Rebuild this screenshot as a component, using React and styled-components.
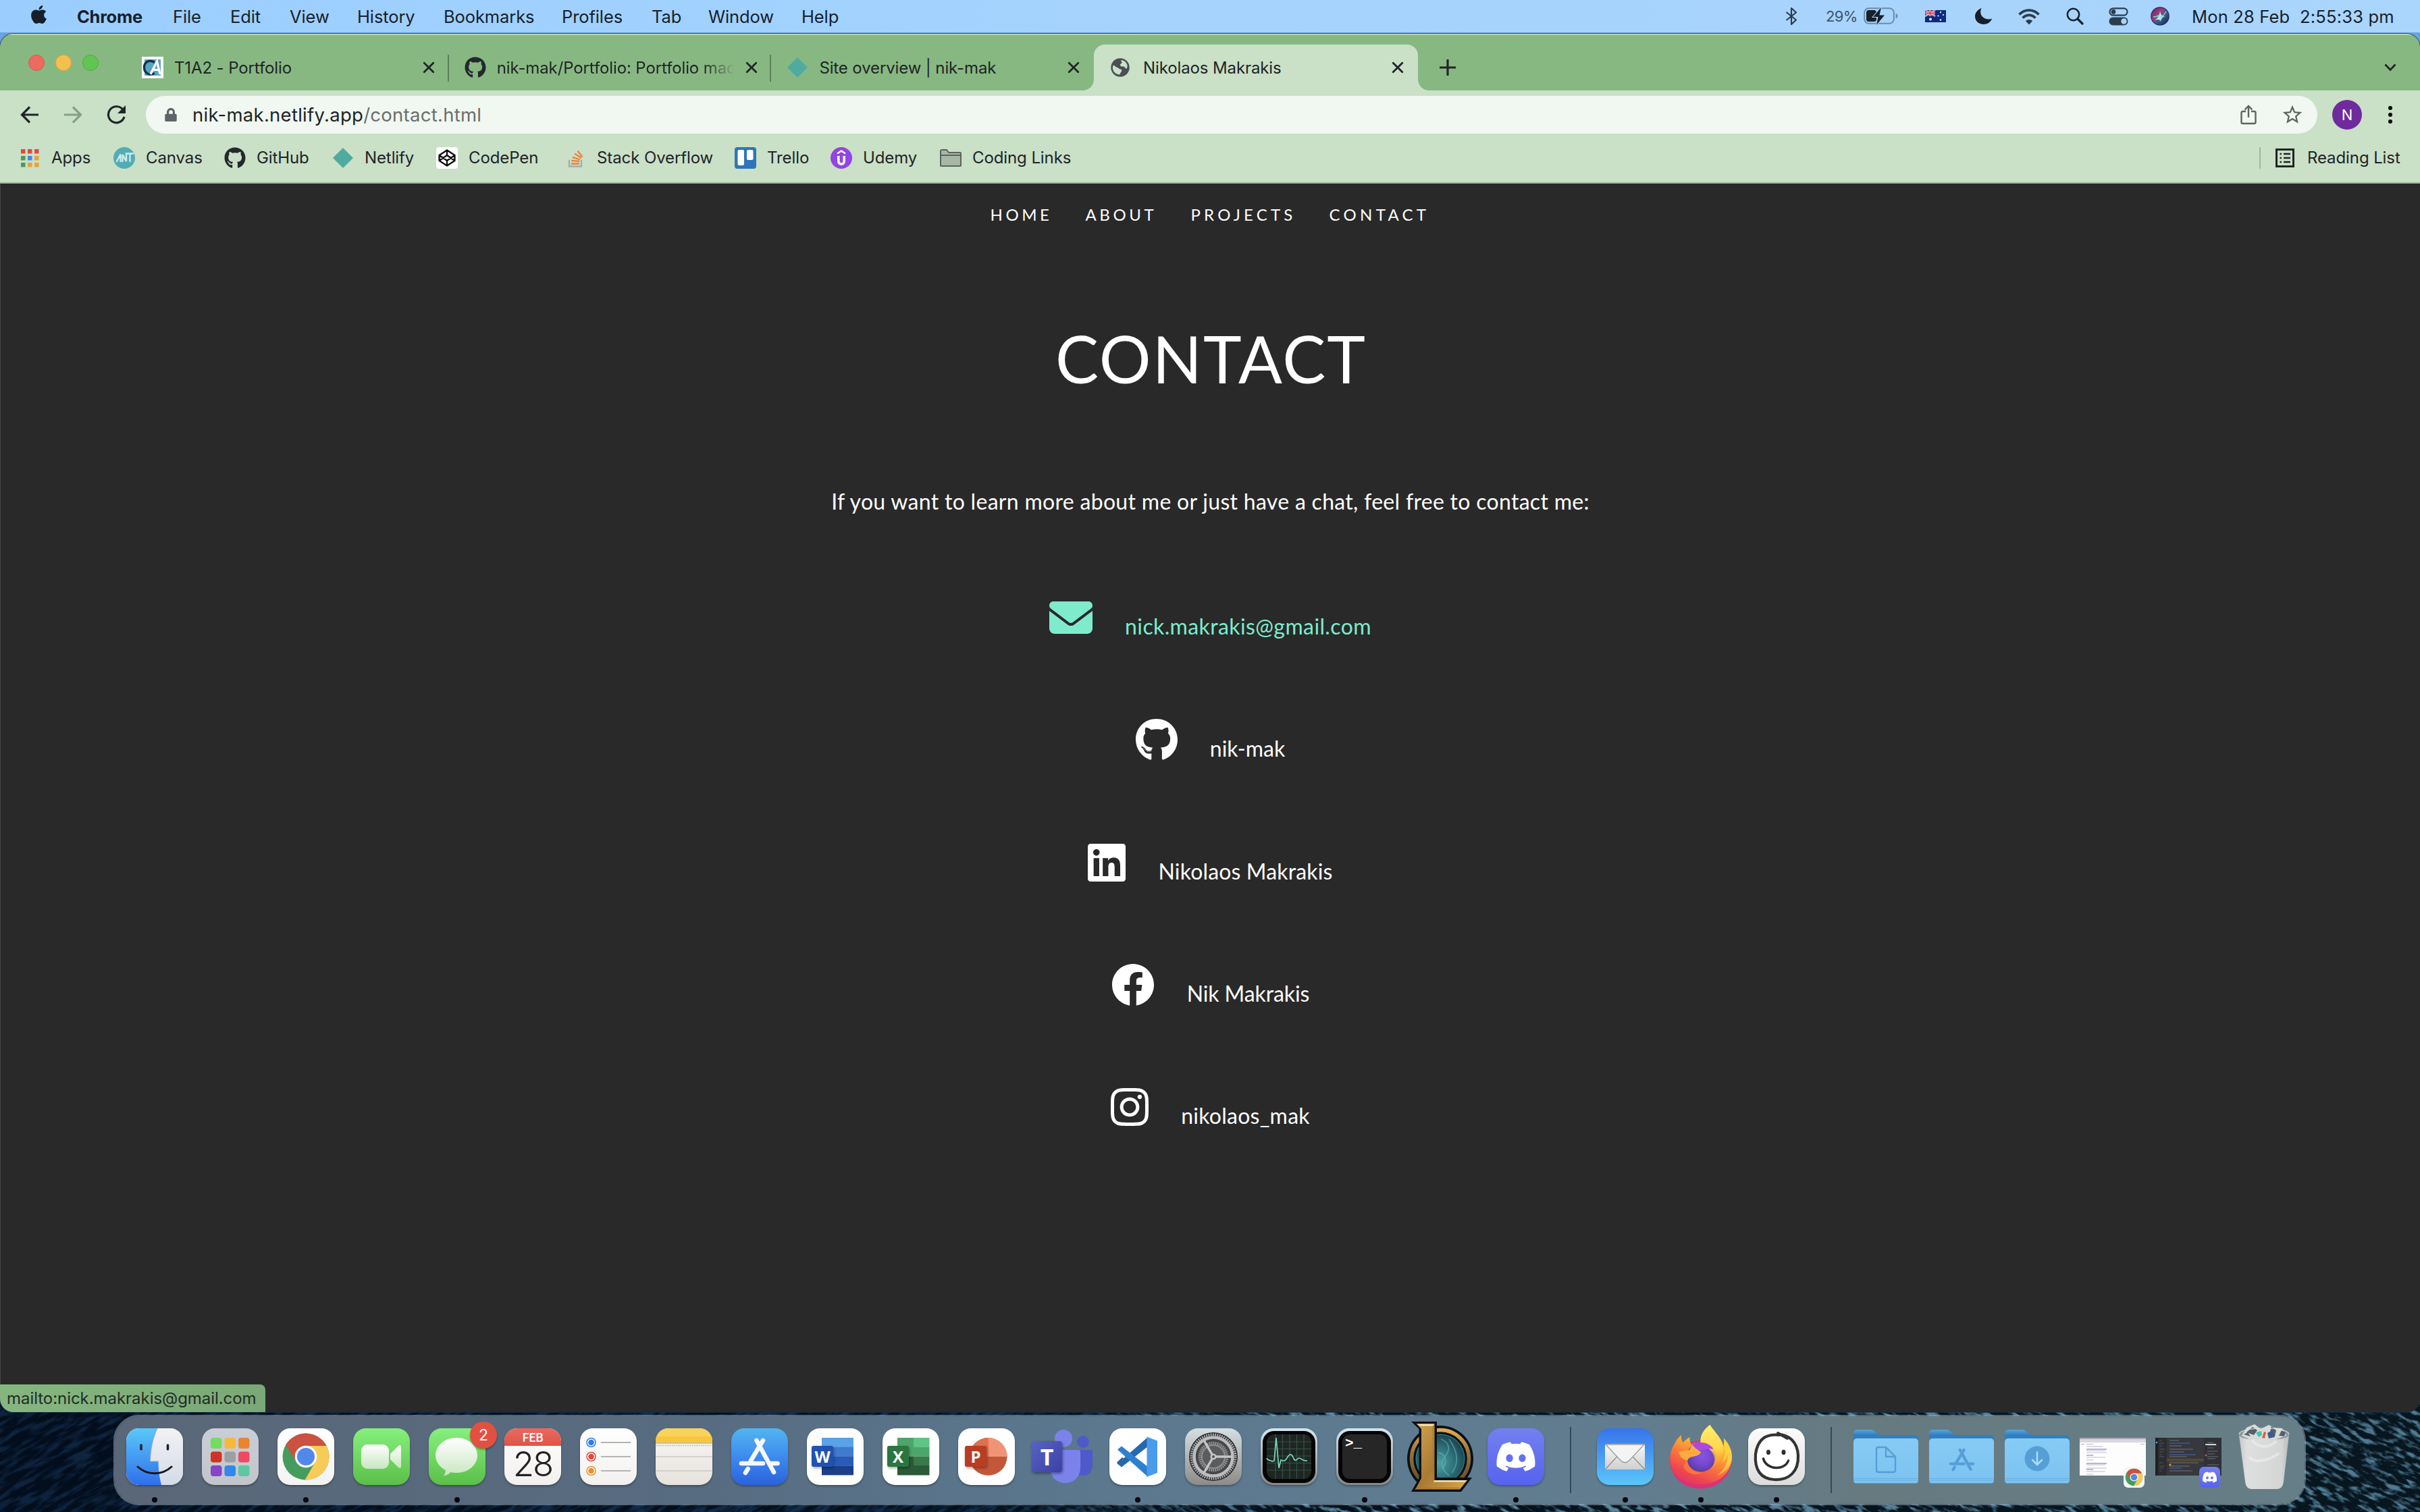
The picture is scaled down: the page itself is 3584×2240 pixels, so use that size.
import React from "react";
import styled, { createGlobalStyle, css } from "styled-components";
import { FaEnvelope, FaGithub, FaLinkedin, FaInstagram } from "react-icons/fa6";
import { FaFacebook, FaApple, FaDiscord, FaLock } from "react-icons/fa";

const ui = `Inter, "Liberation Sans", sans-serif`;
const page = `Lato, "Open Sans", sans-serif`;

const GlobalStyle = createGlobalStyle`
  html, body { margin: 0; padding: 0; background: #061320; }
  * { box-sizing: border-box; }
  svg { display: block; flex: none; }
`;

/* ---------- desktop ---------- */

const Desktop = styled.div`
  position: relative;
  width: 3584px;
  height: 2240px;
  overflow: hidden;
  display: flex;
  flex-direction: column;
  font-family: ${ui};
  background: linear-gradient(#6ba3dc 0, #6ba3dc 80px, #061320 120px);
`;

const Wallpaper = styled.svg`
  position: absolute;
  left: 0;
  bottom: 0;
`;

function Ocean() {
  return (
    <Wallpaper width="3584" height="190" viewBox="0 0 3584 190">
      <defs>
        <linearGradient id="sea" x1="0" x2="1" y1="0" y2="0">
          <stop offset="0" stopColor="#030d1c" />
          <stop offset="0.4" stopColor="#04101c" />
          <stop offset="1" stopColor="#07161f" />
        </linearGradient>
        <linearGradient id="foamLeft" x1="0" x2="1" y1="0" y2="0">
          <stop offset="0" stopColor="#fff" stopOpacity="0.4" />
          <stop offset="0.4" stopColor="#fff" stopOpacity="0.6" />
          <stop offset="0.55" stopColor="#fff" stopOpacity="0" />
        </linearGradient>
        <linearGradient id="foamRight" x1="0" x2="1" y1="0" y2="0">
          <stop offset="0.4" stopColor="#fff" stopOpacity="0" />
          <stop offset="0.55" stopColor="#fff" stopOpacity="1" />
          <stop offset="1" stopColor="#fff" stopOpacity="0.85" />
        </linearGradient>
        <mask id="maskLeft">
          <rect width="3584" height="190" fill="url(#foamLeft)" />
        </mask>
        <mask id="maskRight">
          <rect width="3584" height="190" fill="url(#foamRight)" />
        </mask>
        <filter id="swell" x="0" y="0" width="100%" height="100%" colorInterpolationFilters="sRGB">
          <feTurbulence type="fractalNoise" baseFrequency="0.03 0.14" numOctaves="4" seed="7" />
          <feColorMatrix
            values="0 0 0 0 0.12
                    0 0 0 0 0.27
                    0 0 0 0 0.45
                    3.6 0 0 0 -1.5"
          />
        </filter>
        <filter id="chop" x="0" y="0" width="100%" height="100%" colorInterpolationFilters="sRGB">
          <feTurbulence type="fractalNoise" baseFrequency="0.045 0.15" numOctaves="4" seed="12" />
          <feColorMatrix
            values="0 0 0 0 0.36
                    0 0 0 0 0.55
                    0 0 0 0 0.65
                    4.2 0 0 0 -2"
          />
        </filter>
      </defs>
      <rect width="3584" height="190" fill="url(#sea)" />
      <g mask="url(#maskLeft)">
        <g transform="rotate(-28 1000 95)">
          <rect x="-300" y="-1000" width="2700" height="2200" filter="url(#swell)" />
        </g>
      </g>
      <g mask="url(#maskRight)">
        <g transform="rotate(24 2500 95)">
          <rect x="1200" y="-700" width="2600" height="1600" filter="url(#chop)" />
        </g>
      </g>
    </Wallpaper>
  );
}

/* ---------- menu bar ---------- */

const MenuBar = styled.header`
  position: relative;
  height: 48px;
  flex: none;
  display: flex;
  align-items: center;
  padding-left: 42px;
  background: linear-gradient(90deg, #9bceff, #a5d3fd 50%, #aad5fc);
  color: #16202a;
  font-size: 25.5px;
`;

const MenuItem = styled.span`
  width: ${(p) => p.$w}px;
  flex: none;
  white-space: pre;
  font-weight: ${(p) => (p.$bold ? 700 : 400)};
  letter-spacing: ${(p) => p.$ls || -0.1}px;
`;

const MenuLogo = styled.div`
  width: 72px;
  margin-top: -6px;
`;

const StatusGroup = styled.div`
  margin-left: auto;
  display: flex;
  align-items: center;
  height: 48px;
`;

const StatusSlot = styled.div`
  width: ${(p) => p.$w}px;
  display: flex;
  align-items: center;
`;

const BatteryText = styled.span`
  width: 56px;
  font-size: 22px;
  color: #3c5368;
  letter-spacing: -0.6px;
`;

const Clock = styled.time`
  width: 338px;
  white-space: pre;
  letter-spacing: 0.18px;
`;

const menus = [
  ["Chrome", 142, true, -0.3],
  ["File", 85],
  ["Edit", 88],
  ["View", 100],
  ["History", 128],
  ["Bookmarks", 175],
  ["Profiles", 133],
  ["Tab", 84],
  ["Window", 138],
  ["Help", 80],
];

function StatusIcons() {
  return (
    <StatusGroup>
      <StatusSlot $w={60}>
        <svg width="18" height="28" viewBox="0 0 18 28">
          <path d="M1.500 8L16 19.500 9 26V2L16 8.500 1.500 20" fill="none" stroke="#2b3d4d" strokeWidth="2.200" strokeLinejoin="round" />
        </svg>
      </StatusSlot>
      <BatteryText>29%</BatteryText>
      <StatusSlot $w={91}>
        <svg width="52" height="26" viewBox="0 0 52 26">
          <rect x="1.200" y="1.200" width="43.600" height="22.600" rx="6.500" fill="none" stroke="#6d8aa5" strokeWidth="2" />
          <rect x="4" y="4" width="15" height="17" rx="3.500" fill="#16202a" />
          <path d="M47.500 9c2 .6 3 2 3 3.700s-1 3-3 3.700z" fill="#6d8aa5" />
          <path d="M26 0L14 14h7.500L19 26l12-14.500h-7.500z" fill="#16202a" stroke="#a8d4fc" strokeWidth="2" paintOrder="stroke" />
        </svg>
      </StatusSlot>
      <StatusSlot $w={74}>
        <svg width="31" height="18" viewBox="0 0 31 18">
          <rect width="31" height="18" fill="#0c2a80" />
          <path d="M0 0L15 9M15 0L0 9" stroke="#fff" strokeWidth="2.200" />
          <path d="M0 0L15 9M15 0L0 9" stroke="#d8343f" strokeWidth="0.9" />
          <path d="M7.500 0V9M0 4.500H15" stroke="#fff" strokeWidth="3.200" />
          <path d="M7.500 0V9M0 4.500H15" stroke="#d8343f" strokeWidth="1.800" />
          <circle cx="8" cy="13.500" r="1.900" fill="#fff" />
          <circle cx="23" cy="3.200" r="1.100" fill="#fff" />
          <circle cx="19.500" cy="8.500" r="1.100" fill="#fff" />
          <circle cx="27" cy="7" r="1.100" fill="#fff" />
          <circle cx="23" cy="14.500" r="1.200" fill="#fff" />
        </svg>
      </StatusSlot>
      <StatusSlot $w={64}>
        <svg width="26" height="26" viewBox="0 0 26 26">
          <path d="M9.500 1C3.500 3.500 0 8 0 13.500 0 20 5.500 25 12.500 25c6 0 10.700-3.400 12.700-8.500-8 3.200-17-2-17-9.500 0-2.200.5-4.200 1.300-6z" fill="#16202a" />
        </svg>
      </StatusSlot>
      <StatusSlot $w={71}>
        <svg width="32" height="25" viewBox="0 0 32 25">
          <g fill="none" stroke="#2b3d4d" strokeWidth="3.800">
            <path d="M1.500 9.500C9.500 1 22.500 1 30.500 9.500" />
            <path d="M6.600 14.600C12 9 20 9 25.400 14.600" />
          </g>
          <path d="M16 24.500l-5.200-5.400c2.800-2.800 7.600-2.800 10.400 0z" fill="#2b3d4d" />
        </svg>
      </StatusSlot>
      <StatusSlot $w={63}>
        <svg width="26" height="26" viewBox="0 0 26 26">
          <circle cx="10.500" cy="10.500" r="8.700" fill="none" stroke="#16202a" strokeWidth="2.600" />
          <path d="M17 17l7 7" stroke="#16202a" strokeWidth="3.200" strokeLinecap="round" />
        </svg>
      </StatusSlot>
      <StatusSlot $w={62}>
        <svg width="29" height="27" viewBox="0 0 29 27">
          <rect x="1.500" y="1.300" width="26" height="10.400" rx="5.200" fill="none" stroke="#2b3d4d" strokeWidth="2.200" />
          <circle cx="7" cy="6.500" r="3.400" fill="#2b3d4d" />
          <rect x="0.500" y="14.500" width="28" height="12" rx="6" fill="#2b3d4d" />
          <circle cx="22.500" cy="20.500" r="4.200" fill="#a8d4fc" />
        </svg>
      </StatusSlot>
      <StatusSlot $w={61}>
        <svg width="28" height="28" viewBox="0 0 28 28">
          <defs>
            <linearGradient id="siri" x1="0" x2="1" y1="0" y2="1">
              <stop offset="0" stopColor="#5a2a6e" />
              <stop offset="0.4" stopColor="#a03d76" />
              <stop offset="0.6" stopColor="#2f5f92" />
              <stop offset="1" stopColor="#231b50" />
            </linearGradient>
          </defs>
          <circle cx="14" cy="14" r="13.800" fill="#1e2a55" />
          <circle cx="14" cy="14" r="12.600" fill="url(#siri)" />
          <path d="M6 20C11 17 13 13 14 6c1 6 3 8 8 8-4 1-6 3-7 8-1-3-4-4-9-2z" fill="#d9f6f4" opacity="0.85" />
          <path d="M4 15c5 0 8-1 10-4M15 15c3-1 6-4 8-8" stroke="#6fe0d8" strokeWidth="1.500" fill="none" />
        </svg>
      </StatusSlot>
      <Clock>Mon 28 Feb  2:55:33 pm</Clock>
    </StatusGroup>
  );
}

/* ---------- browser window ---------- */

const Window = styled.main`
  position: relative;
  margin-top: 2px;
  height: 2042px;
  flex: none;
  display: flex;
  flex-direction: column;
  border-radius: 20px;
  overflow: hidden;
  background: #292929;
  box-shadow: 0 0 0 1px rgba(20, 50, 80, 0.7);
`;

const TabStrip = styled.div`
  height: 84px;
  flex: none;
  display: flex;
  align-items: flex-end;
  background: #88b882;
  border-top: 2px solid #b9d6b4;
`;

const Lights = styled.div`
  align-self: flex-start;
  width: 187px;
  padding: 29px 0 0 42px;
  display: flex;
  gap: 16px;
`;

const Light = styled.i`
  width: 24px;
  height: 24px;
  border-radius: 50%;
  background: ${(p) => p.$c};
  border: 1.5px solid ${(p) => p.$edge};
`;

const Tab = styled.div`
  position: relative;
  width: ${(p) => (p.$active ? 480 : 477.7)}px;
  height: 68px;
  padding-left: ${(p) => (p.$active ? 25 : 23)}px;
  display: flex;
  align-items: center;
  ${(p) =>
    p.$divider &&
    css`
      &::after {
        content: "";
        position: absolute;
        right: 0;
        top: 15px;
        width: 2px;
        height: 40px;
        background: #5b7f58;
      }
    `}
  ${(p) =>
    p.$active &&
    css`
      background: #cae0c7;
      border-radius: 16px 16px 0 0;
      &::before,
      &::after {
        content: "";
        position: absolute;
        bottom: 0;
        width: 16px;
        height: 16px;
      }
      &::before {
        left: -16px;
        background: radial-gradient(circle at 0 0, transparent 15.5px, #cae0c7 16px);
      }
      &::after {
        right: -16px;
        background: radial-gradient(circle at 100% 0, transparent 15.5px, #cae0c7 16px);
      }
    `}
`;

const Favicon = styled.div`
  width: 48px;
  flex: none;
`;

const TabTitle = styled.span`
  width: 352px;
  flex: none;
  white-space: nowrap;
  font-size: 24px;
  letter-spacing: -0.12px;
  color: #202427;
  ${(p) => p.$fade && `mask-image: linear-gradient(90deg, #000 305px, transparent 352px);`}
`;

const TabClose = styled.div`
  margin-left: 16px;
`;

const NewTab = styled.div`
  padding: 0 0 22px 32px;
  flex: 1;
`;

const TabSearch = styled.div`
  padding: 0 35px 28px 0;
`;

const Cross = () => (
  <svg width="18" height="18" viewBox="0 0 18 18">
    <path d="M2.200 2.200l13.600 13.600M15.800 2.200L2.200 15.800" stroke="#202427" strokeWidth="2.800" strokeLinecap="round" />
  </svg>
);

const NetlifyMark = () => (
  <svg width="32" height="32" viewBox="0 0 32 32">
    <path d="M16 1L31 16 16 31 1 16z" fill="#4faba0" />
  </svg>
);

const Toolbar = styled.div`
  height: 72px;
  flex: none;
  display: flex;
  align-items: center;
  background: #cae0c7;
  padding-left: 30px;
`;

const NavButton = styled.div`
  width: ${(p) => p.$w}px;
`;

const AddressBar = styled.div`
  width: 3216px;
  height: 56px;
  border-radius: 28px;
  background: #f1f7f1;
  display: flex;
  align-items: center;
  padding: 0 20px 0 27px;
`;

const Url = styled.span`
  flex: 1;
  padding-left: 22px;
  font-size: 27.5px;
  letter-spacing: 0.27px;
  color: #202427;
  em {
    font-style: normal;
    color: #6a6f6c;
  }
`;

const AddressIcon = styled.div`
  margin-left: ${(p) => p.$ml || 0}px;
`;

const Avatar = styled.div`
  width: 44px;
  height: 44px;
  margin-left: 22px;
  border-radius: 50%;
  background: #6f2a9d;
  color: #fff;
  font-size: 22px;
  display: flex;
  align-items: center;
  justify-content: center;
`;

const Kebab = styled.div`
  margin-left: 39px;
`;

const BookmarkBar = styled.div`
  height: 66px;
  flex: none;
  display: flex;
  align-items: center;
  padding: 0 0 8px 28px;
  background: #cae0c7;
  border-bottom: 2px solid #9fb19d;
  font-size: 24px;
  line-height: 28px;
  color: #202427;
`;

const Bookmark = styled.div`
  width: ${(p) => p.$w}px;
  display: flex;
  align-items: center;
  gap: 16px;
  white-space: nowrap;
  letter-spacing: -0.1px;
`;

const IconTile = styled.div`
  width: 32px;
  height: 32px;
  flex: none;
  display: flex;
  align-items: center;
  justify-content: center;
  border-radius: ${(p) => p.$r || 0}px;
  background: ${(p) => p.$bg || "transparent"};
`;

const ReadingList = styled.div`
  margin-left: auto;
  height: 32px;
  width: 238px;
  border-left: 2px solid #a2b69f;
  padding-left: 22px;
  display: flex;
  align-items: center;
  gap: 19px;
  white-space: nowrap;
  letter-spacing: -0.1px;
`;

const AppsGrid = () => (
  <svg width="32" height="32" viewBox="0 0 32 32">
    {[
      ["#e04a3f", "#e04a3f", "#e04a3f"],
      ["#4d9a58", "#4285f4", "#eba233"],
      ["#4d9a58", "#eba233", "#eba233"],
    ].map((row, y) =>
      row.map((c, x) => <rect key={`${x}${y}`} x={3 + x * 10} y={3 + y * 10} width="6.500" height="6.500" fill={c} />)
    )}
  </svg>
);

/* ---------- web page ---------- */

const Page = styled.section`
  flex: 1;
  position: relative;
  background: #292929;
  color: #fff;
  font-family: ${page};
  display: flex;
  flex-direction: column;
  align-items: center;
  border-left: 1px solid #454545;
`;

const SiteNav = styled.nav`
  height: 91px;
  padding: 0 0 0 1px;
  display: flex;
  align-items: center;
  font-size: 24px;
`;

const SiteLink = styled.a`
  width: ${(p) => p.$w}px;
  letter-spacing: ${(p) => p.$ls}px;
  white-space: nowrap;
`;

const Title = styled.h1`
  margin: 110px 0 0 2px;
  font-size: 96px;
  line-height: 116px;
  font-weight: 400;
  letter-spacing: 2px;
`;

const Intro = styled.p`
  margin: 132px 0 0;
  font-size: 32px;
  line-height: 44px;
  letter-spacing: 0.3px;
  white-space: nowrap;
`;

const Contacts = styled.ul`
  list-style: none;
  margin: 118px 0 0;
  padding: 0;
  display: flex;
  flex-direction: column;
  align-items: center;
  gap: 117.3px;
`;

const Contact = styled.li`
  height: 64px;
  display: flex;
  align-items: center;
  gap: 48px;
  color: ${(p) => (p.$on ? "#7eebcd" : "#fff")};
`;

const ContactIcon = styled.span`
  width: ${(p) => p.$w}px;
  display: flex;
  justify-content: center;
`;

const ContactName = styled.span`
  padding-top: 25px;
  font-size: 32px;
  line-height: 39px;
  letter-spacing: ${(p) => p.$ls || 0}px;
  white-space: nowrap;
`;

const StatusBubble = styled.div`
  position: absolute;
  left: -1px;
  bottom: 0;
  width: 393px;
  height: 41px;
  padding-left: 10px;
  display: flex;
  align-items: center;
  background: linear-gradient(90deg, #86b680, #7aa876);
  border-radius: 0 8px 0 0;
  color: #222c26;
  font: 24px ${ui};
  letter-spacing: -0.05px;
  white-space: nowrap;
`;

const contacts = [
  [FaEnvelope, 64, "nick.makrakis@gmail.com", 0.38],
  [FaGithub, 62, "nik-mak", 0],
  [FaLinkedin, 56, "Nikolaos Makrakis", 0.15],
  [FaFacebook, 64, "Nik Makrakis", -0.1],
  [FaInstagram, 56, "nikolaos_mak", 0.25],
];

/* ---------- dock ---------- */

const Dock = styled.footer`
  position: relative;
  margin: 4px 0 0 168px;
  width: 3247px;
  height: 134px;
  flex: none;
  display: flex;
  padding: 0 0 0 3px;
  border-radius: 38px;
  border: 2px solid rgba(160, 178, 192, 0.5);
  background: linear-gradient(90deg, #5a6778, #576b80 25%, #5b788f 45%, #627d8f 70%, #667a80 80%, #667e87);
  background-clip: padding-box;
`;

const Slot = styled.div`
  position: relative;
  width: 112px;
  height: 130px;
  flex: none;
  display: flex;
  justify-content: center;
  align-items: center;
  padding-bottom: 10px;
  ${(p) =>
    p.$running &&
    css`
      &::after {
        content: "";
        position: absolute;
        left: 52px;
        top: 120px;
        width: 8px;
        height: 8px;
        border-radius: 50%;
        background: #05070f;
      }
    `}
`;

const Separator = styled.div`
  width: ${(p) => p.$w}px;
  flex: none;
  display: flex;
  justify-content: center;
  &::after {
    content: "";
    width: 2px;
    height: 98px;
    margin-top: 16px;
    background: #2f4a5a;
  }
`;

const AppTile = styled.div`
  position: relative;
  width: 84px;
  height: 84px;
  border-radius: 19px;
  background: ${(p) => p.$bg};
  box-shadow: 0 2px 3px rgba(0, 0, 0, 0.3);
  overflow: hidden;
`;

const Badge = styled.div`
  position: absolute;
  left: 75px;
  top: 8px;
  width: 40px;
  height: 40px;
  border-radius: 50%;
  background: #e25041;
  color: #fff;
  font-size: 23px;
  display: flex;
  align-items: center;
  justify-content: center;
  box-shadow: 0 2px 3px rgba(0, 0, 0, 0.3);
`;

const CalMonth = styled.div`
  height: 26px;
  background: linear-gradient(#ec695d, #dd5549);
  color: #fff;
  font: 600 17px/28px ${ui};
  letter-spacing: -0.3px;
  text-align: center;
`;

const CalDay = styled.div`
  font: 300 51px/54px ${ui};
  letter-spacing: -2px;
  color: #222;
  text-align: center;
`;

const Art = ({ children, w = 84, h = 84, ...rest }) => (
  <svg width={w} height={h} viewBox={`0 0 ${w} ${h}`} {...rest}>
    {children}
  </svg>
);

const DockDefs = () => (
  <Art w={0} h={0}>
    <defs>
      <linearGradient id="finderBlue" x1="0" x2="0" y1="0" y2="1">
        <stop offset="0" stopColor="#5ac8f8" />
        <stop offset="1" stopColor="#2f6fec" />
      </linearGradient>
      <linearGradient id="finderWhite" x1="0" x2="0" y1="0" y2="1">
        <stop offset="0" stopColor="#f2f2f4" />
        <stop offset="1" stopColor="#d3dbe8" />
      </linearGradient>
      <linearGradient id="softWhite" x1="0" x2="0" y1="0" y2="1">
        <stop offset="0" stopColor="#fff" />
        <stop offset="1" stopColor="#c8e6c0" />
      </linearGradient>
      <linearGradient id="gold" x1="0" x2="1" y1="0" y2="1">
        <stop offset="0" stopColor="#d2a24c" />
        <stop offset="0.5" stopColor="#a97a35" />
        <stop offset="1" stopColor="#dba545" />
      </linearGradient>
      <linearGradient id="goldRing" x1="0" x2="0" y1="0" y2="1">
        <stop offset="0" stopColor="#e2a850" />
        <stop offset="0.4" stopColor="#9a7136" />
        <stop offset="1" stopColor="#5d4522" />
      </linearGradient>
      <radialGradient id="rune" cx="0.45" cy="0.6" r="0.6">
        <stop offset="0" stopColor="#4fa3a6" />
        <stop offset="0.6" stopColor="#2d6d76" />
        <stop offset="1" stopColor="#1b4651" />
      </radialGradient>
      <linearGradient id="foxFire" x1="0.8" x2="0.35" y1="0.05" y2="1">
        <stop offset="0" stopColor="#fff36a" />
        <stop offset="0.3" stopColor="#ffc22e" />
        <stop offset="0.6" stopColor="#fb7a3c" />
        <stop offset="0.88" stopColor="#ee4450" />
        <stop offset="1" stopColor="#e23a60" />
      </linearGradient>
      <linearGradient id="foxTail" x1="0.5" x2="0.5" y1="0" y2="1">
        <stop offset="0" stopColor="#fff16a" />
        <stop offset="0.5" stopColor="#ffd84e" />
        <stop offset="1" stopColor="#ff9a3c" stopOpacity="0" />
      </linearGradient>
      <radialGradient id="foxGlobe" cx="0.55" cy="0.45" r="0.6">
        <stop offset="0" stopColor="#8655e6" />
        <stop offset="0.5" stopColor="#7b47d0" />
        <stop offset="1" stopColor="#4b3f9e" />
      </radialGradient>
      <linearGradient id="folderBack" x1="0" x2="0" y1="0" y2="1">
        <stop offset="0" stopColor="#5ba6d8" />
        <stop offset="0.2" stopColor="#2f7fc0" />
      </linearGradient>
      <linearGradient id="folderFront" x1="0" x2="0" y1="0" y2="1">
        <stop offset="0" stopColor="#86cbf5" />
        <stop offset="1" stopColor="#7cc3f0" />
      </linearGradient>
      <linearGradient id="bin" x1="0" x2="1" y1="0" y2="0">
        <stop offset="0" stopColor="#c3c7c8" />
        <stop offset="0.15" stopColor="#dedfdf" />
        <stop offset="0.85" stopColor="#d4d5d5" />
        <stop offset="1" stopColor="#b7bcbd" />
      </linearGradient>
      <linearGradient id="envelope" x1="0" x2="0" y1="0" y2="1">
        <stop offset="0" stopColor="#fafafa" />
        <stop offset="1" stopColor="#cfcfcf" />
      </linearGradient>
    </defs>
  </Art>
);

const Finder = () => (
  <AppTile $bg="#e6eaf1">
    <Art>
      <rect width="84" height="84" fill="url(#finderWhite)" />
      <path d="M0 0H46C39 15 35.500 33 35.500 49H47.500C47.500 61 49 73 52 84H0z" fill="url(#finderBlue)" />
      <path d="M46 0C39 15 35.500 33 35.500 49H47.500" fill="none" stroke="#8aa6c6" strokeWidth="1" />
      <path d="M22 25v6M61.500 25v6" stroke="#1d2228" strokeWidth="3.600" strokeLinecap="round" />
      <path d="M17 57C31 70 53 70 67 57" fill="none" stroke="#15171b" strokeWidth="3" strokeLinecap="round" />
    </Art>
  </AppTile>
);

const Launchpad = () => (
  <AppTile $bg="linear-gradient(#c9cdd6,#c2c6cb)">
    <Art>
      {["#74dc5f", "#f6b83a", "#e8862f", "#cf3328", "#9aa0a4", "#ee4a63", "#8a42c8", "#3287f0", "#5cc7a0"].map((c, i) => (
        <rect key={c} x={13 + (i % 3) * 20.500} y={14 + Math.floor(i / 3) * 20.500} width="16.500" height="16" rx="4" fill={c} />
      ))}
    </Art>
  </AppTile>
);

const ChromeLogo = ({ size = 84 }) => (
  <svg width={size} height={size} viewBox="0 0 84 84">
    <circle cx="42" cy="42" r="34.500" fill="#449c5d" />
    <path d="M42 26H72.600A34.500 34.500 0 0 1 40.500 76.500L55.860 50z" fill="#f7cb57" />
    <path d="M12.120 24.750A34.500 34.500 0 0 1 72.600 26H42L30 44z" fill="#cb5140" />
    <path d="M12.120 24.750L28.140 50 30 40z" fill="#cb5140" />
    <circle cx="42" cy="42" r="16.300" fill="#fff" />
    <circle cx="42" cy="42" r="13" fill="#5287ec" />
  </svg>
);

const ChromeApp = () => (
  <AppTile $bg="linear-gradient(#fff,#f3f3f3)">
    <ChromeLogo />
  </AppTile>
);

const FaceTime = () => (
  <AppTile $bg="linear-gradient(#86f07d,#5bbf48)">
    <Art>
      <rect x="12" y="24" width="41" height="36" rx="9" fill="url(#softWhite)" />
      <path d="M55 38L67 26c2-2 4-1 4 2v28c0 3-2 4-4 2L55 46z" fill="url(#softWhite)" />
    </Art>
  </AppTile>
);

const MessagesApp = () => (
  <>
    <AppTile $bg="linear-gradient(#86f07d,#5bbf48)">
      <Art>
        <path d="M41 14c17.500 0 31 11.500 31 26S58.500 66 41 66c-3 0-6-.3-8.500-1-3 3-6.500 5-11 5.500 3-2.500 3.500-5.500 3.200-8.500C15.500 57 10 49 10 40c0-14.500 13.500-26 31-26z" fill="url(#softWhite)" />
      </Art>
    </AppTile>
    <Badge>2</Badge>
  </>
);

const CalendarApp = () => (
  <AppTile $bg="linear-gradient(#fff,#f2f0ee)">
    <CalMonth>FEB</CalMonth>
    <CalDay>28</CalDay>
  </AppTile>
);

const Reminders = () => (
  <AppTile $bg="linear-gradient(#fff,#f2f1ef)">
    <Art>
      {["#2b7bf3", "#e2493d", "#e5932f"].map((c, i) => (
        <g key={c}>
          <circle cx="16.500" cy={21 + i * 21} r="6.500" fill="#fff" stroke={c} strokeWidth="1.500" />
          <circle cx="16.500" cy={21 + i * 21} r="4.300" fill={c} />
          <path d={`M31 ${21 + i * 21}H75`} stroke="#b4b4b6" strokeWidth="1.800" />
        </g>
      ))}
    </Art>
  </AppTile>
);

const Notes = () => (
  <AppTile $bg="linear-gradient(#f8f8f7,#e6e2dc)">
    <Art>
      <rect width="84" height="21" fill="#f8d25a" />
      <rect y="12" width="84" height="9.500" fill="#f6c73c" />
      <path d="M0 22H84" stroke="#b9b3a5" strokeWidth="1.600" />
      <path d="M1 25.500H84" stroke="#aaa" strokeWidth="1.400" strokeDasharray="1.500 1.800" />
      <path d="M0 42H84M0 63H84" stroke="#d2d1cf" strokeWidth="1.800" />
    </Art>
  </AppTile>
);

const AppStrokes = ({ color, w }) => (
  <g stroke={color} strokeWidth={w} strokeLinecap="round" fill="none">
    <path d="M47 18L29 48" />
    <path d="M37.500 18L63 65" />
    <path d="M15 52H47M60 52H68.500" />
    <path d="M24.700 60L21 66" />
  </g>
);

const AppStore = () => (
  <AppTile $bg="linear-gradient(#52b5f0,#3c86ee 55%,#2b62dc)">
    <Art>
      <AppStrokes color="#f4f8fe" w={6.600} />
    </Art>
  </AppTile>
);

const OfficeLetter = styled.span`
  position: absolute;
  left: ${(p) => p.$x}px;
  top: 26px;
  width: 32px;
  height: 31px;
  border-radius: 3px;
  background: ${(p) => p.$bg};
  color: #fff;
  font: 700 24px/31px "Open Sans", sans-serif;
  text-align: center;
  box-shadow: 1px 2px 4px rgba(0, 0, 0, 0.35);
`;

const WordApp = () => (
  <AppTile $bg="#fff">
    <Art>
      {["#5aa3e8", "#3f7bcf", "#2a5bb8", "#1b3f8b"].map((c, i) => (
        <rect key={c} x="22" y={14 + i * 13.800} width="47" height="14" fill={c} />
      ))}
    </Art>
    <OfficeLetter $x={7} $bg="#2152b0">W</OfficeLetter>
  </AppTile>
);

const ExcelApp = () => (
  <AppTile $bg="#fff">
    <Art>
      <rect x="22" y="14" width="24" height="27.500" fill="#4ea56c" />
      <rect x="46" y="14" width="23.500" height="14" fill="#60c487" />
      <rect x="46" y="28" width="23.500" height="13.500" fill="#4ea56c" />
      <rect x="22" y="41.500" width="24" height="28" fill="#2c5a38" />
      <rect x="46" y="41.500" width="23.500" height="13.500" fill="#377b48" />
      <rect x="46" y="55" width="23.500" height="14.500" fill="#2c5a38" />
    </Art>
    <OfficeLetter $x={7} $bg="#2b7540">X</OfficeLetter>
  </AppTile>
);

const PowerPointApp = () => (
  <AppTile $bg="#fff">
    <Art>
      <circle cx="44.500" cy="42" r="28" fill="#c4573a" />
      <path d="M44.500 14A28 28 0 0 0 16.500 42H44.500z" fill="#dd7150" />
      <path d="M44.500 14A28 28 0 0 1 72.500 42H44.500z" fill="#f09475" />
    </Art>
    <OfficeLetter $x={10} $bg="#b93d22">P</OfficeLetter>
  </AppTile>
);

const TeamsBox = styled.div`
  position: relative;
  width: 92px;
  height: 84px;
  span {
    position: absolute;
    left: 1px;
    top: 19px;
    width: 45px;
    height: 46px;
    border-radius: 4px;
    background: linear-gradient(135deg, #5a62c3, #3a41a5);
    color: #fff;
    font: 700 34px/46px "Open Sans", sans-serif;
    text-align: center;
    box-shadow: 1px 2px 4px rgba(0, 0, 0, 0.4);
  }
`;

const TeamsApp = () => (
  <TeamsBox>
    <Art w={92}>
      <circle cx="77" cy="20" r="9" fill="#5059c9" />
      <path d="M62 32H88c2 0 3 1 3 3V55c0 9-6 15-13 15s-16-3-16-15z" fill="#5059c9" />
      <circle cx="48" cy="15" r="13" fill="#7b83eb" />
      <path d="M28 32H70c2 0 3 1 3 3V58c0 13-9 23-22.500 23S28 71 28 58z" fill="#7b83eb" />
    </Art>
    <span>T</span>
  </TeamsBox>
);

const VSCodeApp = () => (
  <AppTile $bg="#fff">
    <Art>
      <path d="M12 52.500L18 57.500 57 27V13z" fill="#2668ae" />
      <path d="M12 31.500L18 26.500 57 57V72z" fill="#2f7fd0" />
      <path d="M55.500 12.500L71 18.500V66L55.500 72z" fill="#4a9ceb" />
      <path d="M12 52.500c-1-1-1-2 0-3L19 43l5 4-6 10z" fill="#2668ae" />
    </Art>
  </AppTile>
);

const SettingsApp = () => (
  <AppTile $bg="linear-gradient(#d5dfe4,#8d8b88)">
    <Art>
      <circle cx="42" cy="42" r="36" fill="#26282a" />
      <circle cx="42" cy="42" r="32.500" fill="none" stroke="#a9a9a9" strokeWidth="4" strokeDasharray="2 1.300" />
      <circle cx="42" cy="42" r="28.500" fill="#45484a" stroke="#bdbdbd" strokeWidth="4.500" />
      <circle cx="42" cy="42" r="20" fill="none" stroke="#8e8e8e" strokeWidth="4.500" strokeDasharray="2 1" />
      <circle cx="42" cy="42" r="17" fill="#5a5c5e" stroke="#8e8e8e" strokeWidth="2" />
      <path d="M42 42H70M42 42L28 18M42 42L28 66" stroke="#c6c6c6" strokeWidth="3.400" />
      <circle cx="42" cy="42" r="4.500" fill="#c6c6c6" />
      <circle cx="42" cy="42" r="2" fill="#555" />
    </Art>
  </AppTile>
);

const ActivityApp = () => (
  <AppTile $bg="linear-gradient(#d4e6f0,#85878a)">
    <Art>
      <rect x="3" y="4" width="78" height="77" rx="17" fill="#050505" />
      <rect x="9" y="9" width="66" height="66" rx="11" fill="#1e2622" />
      <path d="M22 9V75M32.500 9V75M43 9V75M53.500 9V75M64 9V75M9 20H75M9 30.500H75M9 41H75M9 51.500H75M9 62H75" stroke="#35514a" strokeWidth="1.200" />
      <path d="M9 44c2 5 5 2 8 5l3-1 3-34 4 45 3-12c4 2 6 2 9-3 4-7 7-7 10 1 3 6 5-1 8-1s4 5 12 4" fill="none" stroke="#7ad4bd" strokeWidth="1.700" />
    </Art>
  </AppTile>
);

const TerminalText = styled.span`
  position: absolute;
  left: 13px;
  top: 12px;
  font: 700 21px/22px "Liberation Mono", monospace;
  color: #fff;
`;

const TerminalApp = () => (
  <AppTile $bg="linear-gradient(#d4e6f0,#85878a)">
    <Art>
      <rect x="3" y="4" width="78" height="77" rx="17" fill="#050505" />
      <rect x="9" y="9" width="66" height="66" rx="11" fill="#262626" />
    </Art>
    <TerminalText>&gt;_</TerminalText>
  </AppTile>
);

const LeagueApp = () => (
  <Art w={98} h={104}>
    <circle cx="49" cy="55" r="49" fill="#071019" />
    <circle cx="49" cy="55" r="42.500" fill="none" stroke="url(#goldRing)" strokeWidth="5.500" />
    <circle cx="49" cy="55" r="36.500" fill="#2f7f88" />
    <circle cx="49" cy="55" r="35.300" fill="url(#rune)" />
    <path d="M50 26c14 6 14 16 6 26s-4 20 6 28M62 26c10 14 18 32 4 50M46 46c12 2 14 14 6 24" stroke="#6cc4c2" strokeWidth="1.800" fill="none" opacity="0.5" />
    <path d="M6 0H44V83H96L80 104H6L17.500 84V11z" fill="#071019" />
    <path d="M14 3.500H40.500V87H89L78 100.500H12L21 84V11z" fill="url(#gold)" />
    <path d="M14 3.500H40.500L38 6.500H20zM40.500 87H89L85 89.500H38z" fill="#f8e4b4" />
    <path d="M38.500 6V89.500M12 100.500L24 91M14 98.500H78" stroke="#a9772c" strokeWidth="1.300" />
  </Art>
);

const DiscordTile = styled(AppTile)`
  display: flex;
  align-items: center;
  justify-content: center;
`;

const DiscordApp = () => (
  <DiscordTile $bg="linear-gradient(#7380f0,#5663ee)">
    <FaDiscord size={62} color="#fff" />
  </DiscordTile>
);

const MailApp = () => (
  <AppTile $bg="linear-gradient(#3673ea,#5bc6f9)">
    <Art>
      <rect x="12" y="23" width="59" height="38" rx="3" fill="url(#envelope)" />
      <path d="M13 60L30 42M70 60L53 42" stroke="#8f8f8f" strokeWidth="1.300" />
      <path d="M13 24L35 47.500c4 4.300 9 4.300 13 0L70 24z" fill="#f4f4f4" stroke="#9b9b9b" strokeWidth="1.300" />
    </Art>
  </AppTile>
);

const FirefoxApp = () => (
  <Art w={92} h={95}>
    <path d="M8 30C3 37 0 44 0 52c0 25 20 42.500 46 42.500S92 75 92 49c0-6-1-12-3-17L60 20z" fill="#d9317a" />
    <path d="M59.500 0C66 10 76 19 79.500 31c.8-3 1-7 .5-11 8 9 12 18 12 29-1 22-20 39-46 39C22 88 4 76 1 58-1 45 2 36 8 26c2-4 5-8 9-11-.5 4 .5 8 2.500 11 3-3 6-6 10-8-.5 4 .5 8 2.500 11 4-3 9-4 13.500-3C45 15 50 7 59.500 0z" fill="url(#foxFire)" />
    <circle cx="46" cy="48" r="21.500" fill="url(#foxGlobe)" />
    <path d="M30 33c4-7 12-9 19-7 8 1 12 5 16 9-3-.5-6-.5-9 .5C50 38 42 38 32 36z" fill="#ab49dc" />
    <path d="M59.500 0C50 7 45 15 45.500 26c8 0 15 3 20 10l-8-1c6 5 9 11 8 18 0 6-3 11-7 14 13-6 20-18 20-32 0-16-12-22-19-35z" fill="url(#foxTail)" />
    <path d="M80 20c3 12 4 24-3 36 5-4 8-9 9-14 1 14-6 26-16 33 13-5 22-16 22-27 0-10-4-20-12-28z" fill="#ffd54a" opacity="0.75" />
    <path d="M13 40c6-2 12-2 16-3l4-8c3 4 8 8 13 11-1 4-6 6-12 7-5 1-7 3-8 6-6-2-12-6-13-13z" fill="#fdab3c" />
    <path d="M26 52c1 14 12 20 24 18-10 6-25 3-29-7 0-4 1-8 5-11z" fill="#fb7440" />
  </Art>
);

const BalsamiqApp = () => (
  <AppTile $bg="linear-gradient(#fcfcfc,#dcdcdc)">
    <Art>
      <path d="M46 10C26 8 14 16 11 38c-2 24 8 37 28 38 22 1 36-12 35-36C73 20 60 9 44 9" fill="#fff" stroke="#343434" strokeWidth="4.200" strokeLinecap="round" />
      <path d="M44 7l14 8" stroke="#343434" strokeWidth="4" strokeLinecap="round" />
      <ellipse cx="30" cy="35.500" rx="3" ry="3.800" fill="#2e2e2e" />
      <ellipse cx="52.500" cy="35.500" rx="3" ry="3.800" fill="#2e2e2e" />
      <path d="M22.500 45C27 62 54 63 59.500 48" fill="none" stroke="#2e2e2e" strokeWidth="3.600" strokeLinecap="round" />
    </Art>
  </AppTile>
);

const Folder = ({ children }) => (
  <Art w={96} h={81}>
    <path d="M0 6c0-4 2-6 6-6H25c7 0 9 8 18 8H90c4 0 6 2 6 6V40H0z" fill="url(#folderBack)" />
    <rect y="13" width="96" height="67" rx="5" fill="url(#folderFront)" />
    <path d="M0 72.500H96M0 75H96" stroke="#69b0e0" strokeWidth="1" />
    <path d="M3 79.500H93" stroke="#5b9cc8" strokeWidth="1.200" />
    {children}
  </Art>
);

const DocumentsFolder = () => (
  <Folder>
    <path d="M37 26H48L62 40V60c0 2-1 3-3 3H37c-2 0-3-1-3-3V29c0-2 1-3 3-3zM48 26V40H62" fill="none" stroke="#559fd6" strokeWidth="2.400" />
  </Folder>
);

const ApplicationsFolder = () => (
  <Folder>
    <g transform="translate(22.500 19) scale(0.62 0.61)">
      <AppStrokes color="#559fd6" w={7} />
    </g>
  </Folder>
);

const DownloadsFolder = () => (
  <Folder>
    <circle cx="48" cy="43" r="18.500" fill="#559fd6" />
    <path d="M48 33.500V51M41 45l7 7 7-7" fill="none" stroke="#a9dcfb" strokeWidth="2.600" strokeLinecap="round" />
  </Folder>
);

const Thumb = styled.div`
  position: relative;
  width: 98px;
  height: 84px;
  padding-top: 14px;
`;

const ThumbBadge = styled.div`
  position: absolute;
  right: 2px;
  bottom: -4px;
  width: 31px;
  height: 31px;
  border-radius: 7px;
  display: flex;
  align-items: center;
  justify-content: center;
  background: ${(p) => p.$bg};
`;

const searchLines = [17, 19, 22, 26, 29, 33, 38, 40, 45, 47, 50, 54];
const ChromeThumb = () => (
  <Thumb>
    <Art w={98} h={56}>
      <rect width="98" height="56" fill="#fdfdfd" />
      <rect width="98" height="2.500" fill="#a9a8b4" />
      <rect y="2.500" width="98" height="4.500" fill="#d8d6de" />
      <path d="M2 9.500H7M10 9.500H20M90 9.500H96M10 13H34" stroke="#b5b9c6" strokeWidth="1" />
      {searchLines.map((y, i) => (
        <path key={y} d={`M10 ${y}H${i % 3 === 1 ? 38 : i % 2 ? 20 : 40}`} stroke={i % 3 ? "#c9c9d2" : "#8c84cf"} strokeWidth="1.200" />
      ))}
    </Art>
    <ThumbBadge $bg="#f6f6f6">
      <ChromeLogo size={31} />
    </ThumbBadge>
  </Thumb>
);

const DiscordThumb = () => (
  <Thumb>
    <Art w={98} h={56}>
      <rect width="98" height="56" fill="#36383d" />
      <rect width="4" height="56" fill="#1f2023" />
      <rect x="4" width="13" height="56" fill="#2b2d31" />
      <rect x="72" width="26" height="56" fill="#303136" />
      <rect x="17" y="31" width="55" height="4" fill="#57482f" />
      <circle cx="2" cy="7" r="1.300" fill="#6aa7e0" />
      {[4, 8, 12, 17, 21, 25, 28, 37, 42, 45, 49].map((y, i) => (
        <g key={y}>
          <path d={`M21 ${y}H${35 + ((i * 17) % 30)}`} stroke={i % 4 === 1 ? "#3f66c0" : "#707379"} strokeWidth="1" />
          <path d={`M6 ${y}H${10 + ((i * 3) % 5)}`} stroke="#55585e" strokeWidth="1" />
          <path d={`M77 ${y + 3}H${86 + ((i * 5) % 9)}`} stroke="#6c6f75" strokeWidth="1" />
        </g>
      ))}
      <path d="M74 10H90" stroke="#fff" strokeWidth="1.500" />
      <circle cx="75" cy="26" r="1.500" fill="#df4e4e" />
      <circle cx="22" cy="40" r="1.600" fill="#e0a030" />
    </Art>
    <ThumbBadge $bg="linear-gradient(#7380f0,#5663ee)">
      <FaDiscord size={23} color="#fff" />
    </ThumbBadge>
  </Thumb>
);

const Trash = () => (
  <Art w={76} h={98}>
    <path d="M1 16C1 10 18 7 38 7s37 3 37 9-17 9-37 9S1 22 1 16z" fill="#8f999c" />
    <path d="M5 18L12 6l12-5 9 7 12-6 8 4 12 1 6 11-20 7H20z" fill="#d9dad8" />
    <path d="M12 13l9-8 7 5-5 7zM46 16l3-12 7 6-2 9zM60 18l4-8 6 3-2 6zM8 16l6-3 4 6z" fill="#56606a" />
    <path d="M26 13l8-2 1 6-5 3z" fill="#43c3b0" />
    <path d="M35 21l3-9 3 1-2 9z" fill="#e0603c" />
    <path d="M43 14l7-4 4 10-9 2z" fill="#3f5a8c" />
    <path d="M1 17C6 25 24 23 38 23s32 2 37-6L67 86c-1 7-4 11-10 11H20c-6 0-9-4-10-11z" fill="url(#bin)" />
    <path d="M20 24C30 38 46 36 56 26M16 50c10 10 30 4 44-6" stroke="#f3f3f3" strokeWidth="4" fill="none" opacity="0.5" />
    <path d="M1 16C1 10 18 7 38 7s37 3 37 9" fill="none" stroke="#dfe3e4" strokeWidth="1.500" opacity="0.7" />
  </Art>
);

const apps = [
  [Finder, true], [Launchpad], [ChromeApp, true], [FaceTime], [MessagesApp, true], [CalendarApp],
  [Reminders], [Notes], [AppStore], [WordApp], [ExcelApp], [PowerPointApp], [TeamsApp],
  [VSCodeApp, true], [SettingsApp], [ActivityApp], [TerminalApp, true], [LeagueApp], [DiscordApp, true],
];
const recent = [[MailApp, true], [FirefoxApp, true], [BalsamiqApp, true]];
const shelf = [[DocumentsFolder], [ApplicationsFolder], [DownloadsFolder], [ChromeThumb], [DiscordThumb], [Trash]];

const renderSlots = (list) =>
  list.map(([Icon, running], i) => (
    <Slot key={i} $running={running}>
      <Icon />
    </Slot>
  ));

/* ---------- composition ---------- */

const Globe = () => (
  <svg width="28" height="28" viewBox="0 0 29 29">
    <circle cx="14.500" cy="14.500" r="14.200" fill="#4b4f54" />
    <path d="M4 11c2 0 3 3 6 3.500 2 .5 2.500 2 4.500 2.500 2 0 3 1.500 2 3.500s-2 2-2.500 5C7 25 2.500 20 3 14z" fill="#cae0c7" />
    <path d="M16 3.200c5 .5 8.500 3.800 9.500 8.300 0 2-.5 4-1.500 5-2-.5-2-3-4-3.500-2 0-5 .5-5.500-2s2-2 2.500-3.500-1.500-2-1-4.300z" fill="#cae0c7" />
  </svg>
);

const CoderMark = () => (
  <svg width="32" height="32" viewBox="0 0 32 32">
    <rect width="32" height="32" fill="#fff" />
    <rect x="4" y="4" width="24" height="24" fill="#5ba3c4" />
    <path d="M19 8.500C10 3 3.500 9 3.500 16S10 29 19 24.500" fill="none" stroke="#17304f" strokeWidth="3.400" />
    <path d="M13 26L22.500 7 27 26M17 19.500H26" fill="none" stroke="#fff" strokeWidth="3.200" />
  </svg>
);

export default function App() {
  return (
    <Desktop>
      <GlobalStyle />
      <Ocean />
      <MenuBar>
        <MenuLogo>
          <FaApple size={31} color="#16202a" />
        </MenuLogo>
        {menus.map(([label, w, bold, ls]) => (
          <MenuItem key={label} $w={w} $bold={bold} $ls={ls}>
            {label}
          </MenuItem>
        ))}
        <StatusIcons />
      </MenuBar>

      <Window>
        <TabStrip>
          <Lights>
            <Light $c="#ed6a5e" $edge="#d55a4f" />
            <Light $c="#f5bf4f" $edge="#daa63f" />
            <Light $c="#61c554" $edge="#51a943" />
          </Lights>
          <Tab $divider>
            <Favicon>
              <CoderMark />
            </Favicon>
            <TabTitle>T1A2 - Portfolio</TabTitle>
            <TabClose><Cross /></TabClose>
          </Tab>
          <Tab $divider>
            <Favicon>
              <FaGithub size={32} color="#24292e" />
            </Favicon>
            <TabTitle $fade>nik-mak/Portfolio: Portfolio mad</TabTitle>
            <TabClose><Cross /></TabClose>
          </Tab>
          <Tab>
            <Favicon>
              <NetlifyMark />
            </Favicon>
            <TabTitle>Site overview | nik-mak</TabTitle>
            <TabClose><Cross /></TabClose>
          </Tab>
          <Tab $active>
            <Favicon>
              <Globe />
            </Favicon>
            <TabTitle>Nikolaos Makrakis</TabTitle>
            <TabClose><Cross /></TabClose>
          </Tab>
          <NewTab>
            <svg width="24" height="24" viewBox="0 0 24 24">
              <path d="M12 0V24M0 12H24" stroke="#202427" strokeWidth="3.200" />
            </svg>
          </NewTab>
          <TabSearch>
            <svg width="18" height="12" viewBox="0 0 18 12">
              <path d="M1.500 1.500L9 9.500 16.500 1.500" fill="none" stroke="#202427" strokeWidth="2.800" />
            </svg>
          </TabSearch>
        </TabStrip>

        <Toolbar>
          <NavButton $w={64}>
            <svg width="28" height="26" viewBox="0 0 28 26">
              <path d="M27 13H3M14 1.500L2.500 13 14 24.500" fill="none" stroke="#202427" strokeWidth="3.200" />
            </svg>
          </NavButton>
          <NavButton $w={64}>
            <svg width="28" height="26" viewBox="0 0 28 26">
              <path d="M1 13H25M14 1.500L25.500 13 14 24.500" fill="none" stroke="#86a085" strokeWidth="3.200" />
            </svg>
          </NavButton>
          <NavButton $w={58}>
            <svg width="29" height="28" viewBox="0 0 29 28">
              <path d="M24 6.500A12 12 0 1 0 26 17" fill="none" stroke="#202427" strokeWidth="3.200" />
              <path d="M28 0V12H16z" fill="#202427" />
            </svg>
          </NavButton>
          <AddressBar>
            <FaLock size={20} color="#5f6468" />
            <Url>
              nik-mak.netlify.app<em>/contact.html</em>
            </Url>
            <AddressIcon>
              <svg width="24" height="30" viewBox="0 0 24 30">
                <path d="M8 10H3.500c-1.200 0-2 .8-2 2V26c0 1.200.8 2 2 2H20.500c1.200 0 2-.8 2-2V12c0-1.200-.8-2-2-2H16M12 19V2.500M6.500 7.500L12 2l5.500 5.500" fill="none" stroke="#5d6462" strokeWidth="2.400" />
              </svg>
            </AddressIcon>
            <AddressIcon $ml={36}>
              <svg width="34" height="34" viewBox="0 0 24 24">
                <path d="M22 9.240l-7.190-.62L12 2 9.190 8.630 2 9.240l5.460 4.730L5.820 21 12 17.270 18.180 21l-1.630-7.030L22 9.240zM12 15.400l-3.760 2.270 1-4.280-3.320-2.880 4.380-.38L12 6.100l1.710 4.040 4.380.38-3.320 2.880 1 4.280L12 15.400z" fill="#5d6462" />
              </svg>
            </AddressIcon>
          </AddressBar>
          <Avatar>N</Avatar>
          <Kebab>
            <svg width="6" height="26" viewBox="0 0 6 26">
              <circle cx="3" cy="3" r="3" />
              <circle cx="3" cy="13" r="3" />
              <circle cx="3" cy="23" r="3" />
            </svg>
          </Kebab>
        </Toolbar>

        <BookmarkBar>
          <Bookmark $w={140}>
            <AppsGrid />Apps
          </Bookmark>
          <Bookmark $w={164}>
            <svg width="32" height="32" viewBox="0 0 32 32">
              <circle cx="16" cy="16" r="16" fill="#51adb3" />
              <path d="M4.500 22L10.500 10.500V22M13.500 22V11L19 21V9.500H30M24.500 9.500V22" fill="none" stroke="#cdeaec" strokeWidth="2.400" />
            </svg>
            Canvas
          </Bookmark>
          <Bookmark $w={160}>
            <FaGithub size={32} color="#24292e" />GitHub
          </Bookmark>
          <Bookmark $w={154}>
            <NetlifyMark />Netlify
          </Bookmark>
          <Bookmark $w={190}>
            <IconTile $bg="#fff" $r={4}>
              <svg width="28" height="28" viewBox="0 0 28 28">
                <path d="M14 2.500L25.500 10V18L14 25.500 2.500 18V10zM14 2.500V10M14 18V25.500M2.500 10L14 18 25.500 10M2.500 18L14 10 25.500 18" fill="none" stroke="#0c0c0c" strokeWidth="2.300" strokeLinejoin="round" />
              </svg>
            </IconTile>
            CodePen
          </Bookmark>
          <Bookmark $w={252}>
            <svg width="32" height="32" viewBox="0 0 32 32">
              <path d="M7 19V28.500H25V19" fill="none" stroke="#a7abaf" strokeWidth="2.400" />
              <path d="M10 24.500H22M10.400 19.800L22.200 21M11.800 14.800L23 18.500M15 9.600L25 16M19.500 5.500L26.500 14.500" stroke="#ee8036" strokeWidth="2.300" />
            </svg>
            Stack Overflow
          </Bookmark>
          <Bookmark $w={142}>
            <svg width="32" height="32" viewBox="0 0 32 32">
              <rect width="32" height="32" rx="4" fill="#2e75bb" />
              <rect x="4.500" y="4" width="9.500" height="23" rx="2" fill="#fff" />
              <rect x="18" y="4" width="9.500" height="15" rx="2" fill="#fff" />
            </svg>
            Trello
          </Bookmark>
          <Bookmark $w={162}>
            <svg width="32" height="32" viewBox="0 0 32 32">
              <circle cx="16" cy="16" r="16" fill="#9343e6" />
              <path d="M10 9.500L16 5.500 22 9.500" fill="none" stroke="#fff" strokeWidth="2.600" />
              <path d="M11.800 13V21c0 5.500 8.400 5.500 8.400 0V13" fill="none" stroke="#fff" strokeWidth="3.600" />
            </svg>
            Udemy
          </Bookmark>
          <Bookmark $w={220}>
            <svg width="32" height="26" viewBox="0 0 32 26">
              <path d="M1 24V3c0-1 .6-2 2-2H10l3 4H30c.6 0 1 .4 1 1V24c0 .6-.4 1-1 1H2c-.6 0-1-.4-1-1z" fill="#a8b8a6" stroke="#5c635c" strokeWidth="2" />
              <path d="M1 9H31" stroke="#5c635c" strokeWidth="2" />
            </svg>
            Coding Links
          </Bookmark>
          <ReadingList>
            <svg width="28" height="28" viewBox="0 0 28 28">
              <rect x="1.500" y="1.500" width="25" height="25" fill="none" stroke="#202427" strokeWidth="3" />
              <path d="M6.500 8H9M12 8H22M6.500 14H9M12 14H22M6.500 20H9M12 20H22" stroke="#202427" strokeWidth="2.600" />
            </svg>
            Reading List
          </ReadingList>
        </BookmarkBar>

        <Page>
          <SiteNav>
            <SiteLink $w={141} $ls={4.6}>HOME</SiteLink>
            <SiteLink $w={156} $ls={4.6}>ABOUT</SiteLink>
            <SiteLink $w={205} $ls={5.2}>PROJECTS</SiteLink>
            <SiteLink $w={151} $ls={5.3}>CONTACT</SiteLink>
          </SiteNav>
          <Title>CONTACT</Title>
          <Intro>If you want to learn more about me or just have a chat, feel free to contact me:</Intro>
          <Contacts>
            {contacts.map(([Icon, w, name, ls], i) => (
              <Contact key={name} $on={i === 0}>
                <ContactIcon $w={w}>
                  <Icon size={64} />
                </ContactIcon>
                <ContactName $ls={ls}>{name}</ContactName>
              </Contact>
            ))}
          </Contacts>
          <StatusBubble>mailto:nick.makrakis@gmail.com</StatusBubble>
        </Page>
      </Window>

      <Dock>
        <DockDefs />
        {renderSlots(apps)}
        <Separator $w={50} />
        {renderSlots(recent)}
        <Separator $w={50} />
        {renderSlots(shelf)}
      </Dock>
    </Desktop>
  );
}
